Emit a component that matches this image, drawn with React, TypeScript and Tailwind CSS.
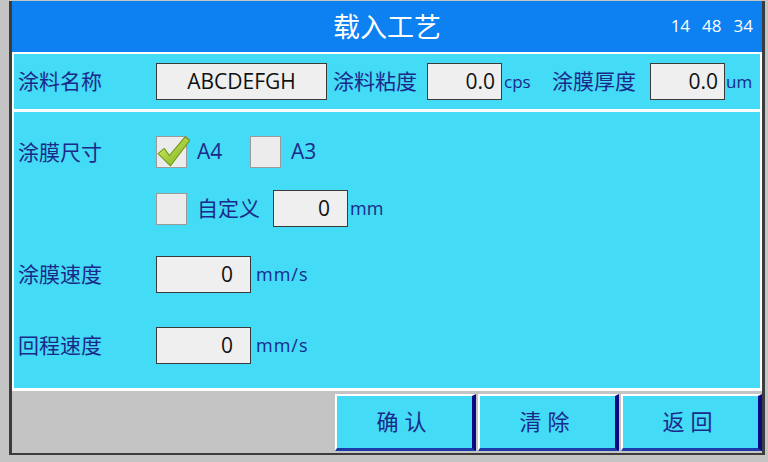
import React from "react";

const font = { fontFamily: '"Open Sans", "Noto Sans CJK SC", "Noto Sans", sans-serif' };

function Field({ value, w, pr = "pr-[18px]", align = "right" }: { value: string; w: string; pr?: string; align?: "right" | "center" }) {
  return (
    <div
      className={`${w} h-[37px] bg-[#efefef] border border-[#3a3a3a] flex items-center text-[21px] text-[#111] leading-none ${
        align === "right" ? `justify-end ${pr}` : "justify-center"
      }`}
    >
      {value}
    </div>
  );
}

function Check({ checked }: { checked?: boolean }) {
  return (
    <div className="relative w-[31px] h-[32px] bg-[#ececec] border border-[#9a9a9a] shrink-0">
      {checked && (
        <svg viewBox="0 0 32 32" className="absolute left-[0px] top-[-2px] w-[33px] h-[33px]">
          <defs>
            <linearGradient id="g" x1="0" y1="0" x2="1" y2="1">
              <stop offset="0" stopColor="#dcf06a" />
              <stop offset="1" stopColor="#74ab16" />
            </linearGradient>
          </defs>
          <path
            d="M1 18 L7 13 L12 20 L27 2 L32 5 L13 30 Z"
            fill="url(#g)"
            stroke="#6c9a18"
            strokeWidth="1"
            strokeLinejoin="round"
          />
        </svg>
      )}
    </div>
  );
}

function Btn({ label }: { label: string }) {
  return (
    <div className="w-[141px] h-[57px] bg-[#43dbf5] border-l-[2px] border-t-[2px] border-l-white border-t-white border-r-[4px] border-r-[#0a0a80] border-b-[3px] border-b-[#1c3aa8] flex items-center justify-center text-[22px] text-[#1b2a8a] tracking-[6px]">
      {label}
    </div>
  );
}

export default function App() {
  const label = "text-[21px] text-[#1b2a8a] leading-none";
  return (
    <div style={font} className="w-[768px] h-[462px] bg-[#c4c4c4] pt-[1px] pl-[9px] pr-[3px] pb-[7px] overflow-hidden">
      <div className="w-full h-full flex flex-col bg-white border-l-[3px] border-r-[3px] border-b-[2px] border-[#3c3c3c]">
        {/* Title */}
        <div className="h-[51px] bg-[#0d80f2] flex items-center relative shrink-0">
          <div className="flex-1 text-center text-white text-[27px] leading-none pl-[0px]">载入工艺</div>
          <div className="absolute right-[9px] top-[16px] text-white text-[17px] leading-none flex gap-[12px]">
            <span>14</span>
            <span>48</span>
            <span>34</span>
          </div>
        </div>
        {/* Row 1 */}
        <div className="mt-[2px] mx-[2px] h-[55px] bg-[#43dbf5] flex items-center shrink-0">
          <span className={`${label} ml-[4px] w-[138px]`}>涂料名称</span>
          <Field value="ABCDEFGH" w="w-[171px]" align="center" />
          <span className={`${label} ml-[6px] w-[94px]`}>涂料粘度</span>
          <Field value="0.0" w="w-[75px]" pr="pr-[6px]" />
          <span className="text-[17px] text-[#1b2a8a] ml-[2px] w-[48px]">cps</span>
          <span className={`${label} w-[98px]`}>涂膜厚度</span>
          <Field value="0.0" w="w-[75px]" pr="pr-[6px]" />
          <span className="text-[17px] text-[#1b2a8a] ml-[1px]">um</span>
        </div>
        {/* Main */}
        <div className="mt-[3px] mx-[2px] h-[276px] bg-[#43dbf5] flex flex-col shrink-0">
          <div className="mt-[24px] h-[32px] flex items-center">
            <span className={`${label} ml-[4px] w-[138px]`}>涂膜尺寸</span>
            <Check checked />
            <span className="text-[21px] text-[#1b2a8a] ml-[10px] w-[53px]">A4</span>
            <Check />
            <span className="text-[21px] text-[#1b2a8a] ml-[10px]">A3</span>
          </div>
          <div className="mt-[22px] h-[37px] flex items-center">
            <span className="w-[142px]" />
            <Check />
            <span className={`${label} ml-[10px] w-[76px]`}>自定义</span>
            <Field value="0" w="w-[75px]" pr="pr-[17px]" />
            <span className="text-[18px] text-[#1b2a8a] ml-[2px]">mm</span>
          </div>
          <div className="mt-[29px] h-[37px] flex items-center">
            <span className={`${label} ml-[4px] w-[138px]`}>涂膜速度</span>
            <Field value="0" w="w-[95px]" pr="pr-[17px]" />
            <span className="text-[18px] text-[#1b2a8a] ml-[5px] tracking-[1px]">mm/s</span>
          </div>
          <div className="mt-[34px] h-[37px] flex items-center">
            <span className={`${label} ml-[4px] w-[138px]`}>回程速度</span>
            <Field value="0" w="w-[95px]" pr="pr-[17px]" />
            <span className="text-[18px] text-[#1b2a8a] ml-[5px] tracking-[1px]">mm/s</span>
          </div>
        </div>
        {/* Bottom bar */}
        <div className="mt-[3px] flex-1 bg-[#c4c4c4] flex items-center justify-end gap-[2px]">
          <Btn label="确认" />
          <Btn label="清除" />
          <Btn label="返回" />
        </div>
      </div>
    </div>
  );
}
